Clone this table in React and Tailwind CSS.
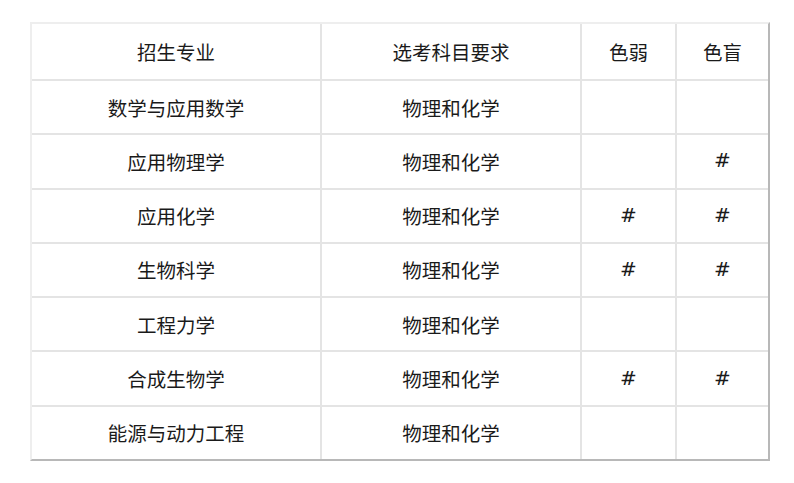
const rows = [
  ["数学与应用数学", "物理和化学", "", ""],
  ["应用物理学", "物理和化学", "", "#"],
  ["应用化学", "物理和化学", "#", "#"],
  ["生物科学", "物理和化学", "#", "#"],
  ["工程力学", "物理和化学", "", ""],
  ["合成生物学", "物理和化学", "#", "#"],
  ["能源与动力工程", "物理和化学", "", ""],
];

const head = ["招生专业", "选考科目要求", "色弱", "色盲"];

function Cell({ children, mark }) {
  return (
    <div
      className={`bg-white flex items-center justify-center ${
        mark ? "text-[20px] pb-[2px]" : "text-[19.5px]"
      }`}
      style={
        mark ? { fontFamily: '"DejaVu Sans", "Liberation Sans", sans-serif' } : undefined
      }
    >
      {children}
    </div>
  );
}

export default function App() {
  return (
    <div
      className="w-[794px] h-[483px] bg-white pt-[22px] pl-[30px] text-[#1a1a1a]"
      style={{ fontFamily: '"Noto Sans CJK SC", "Noto Sans", sans-serif' }}
    >
      <div className="w-[740px] h-[439px] border-2 border-t-[#eeeeee] border-l-[#eeeeee] border-r-[#b8b8b8] border-b-[#b8b8b8]">
        <div className="grid h-full grid-cols-[288px_258px_93px_91px] grid-rows-[55px_repeat(7,1fr)] gap-[2px] bg-[#e4e4e4]">
          {head.map((h) => (
            <Cell key={h}>{h}</Cell>
          ))}
          {rows.map((r) =>
            r.map((c, i) => (
              <Cell key={r[0] + i} mark={i > 1}>
                {c}
              </Cell>
            ))
          )}
        </div>
      </div>
    </div>
  );
}
